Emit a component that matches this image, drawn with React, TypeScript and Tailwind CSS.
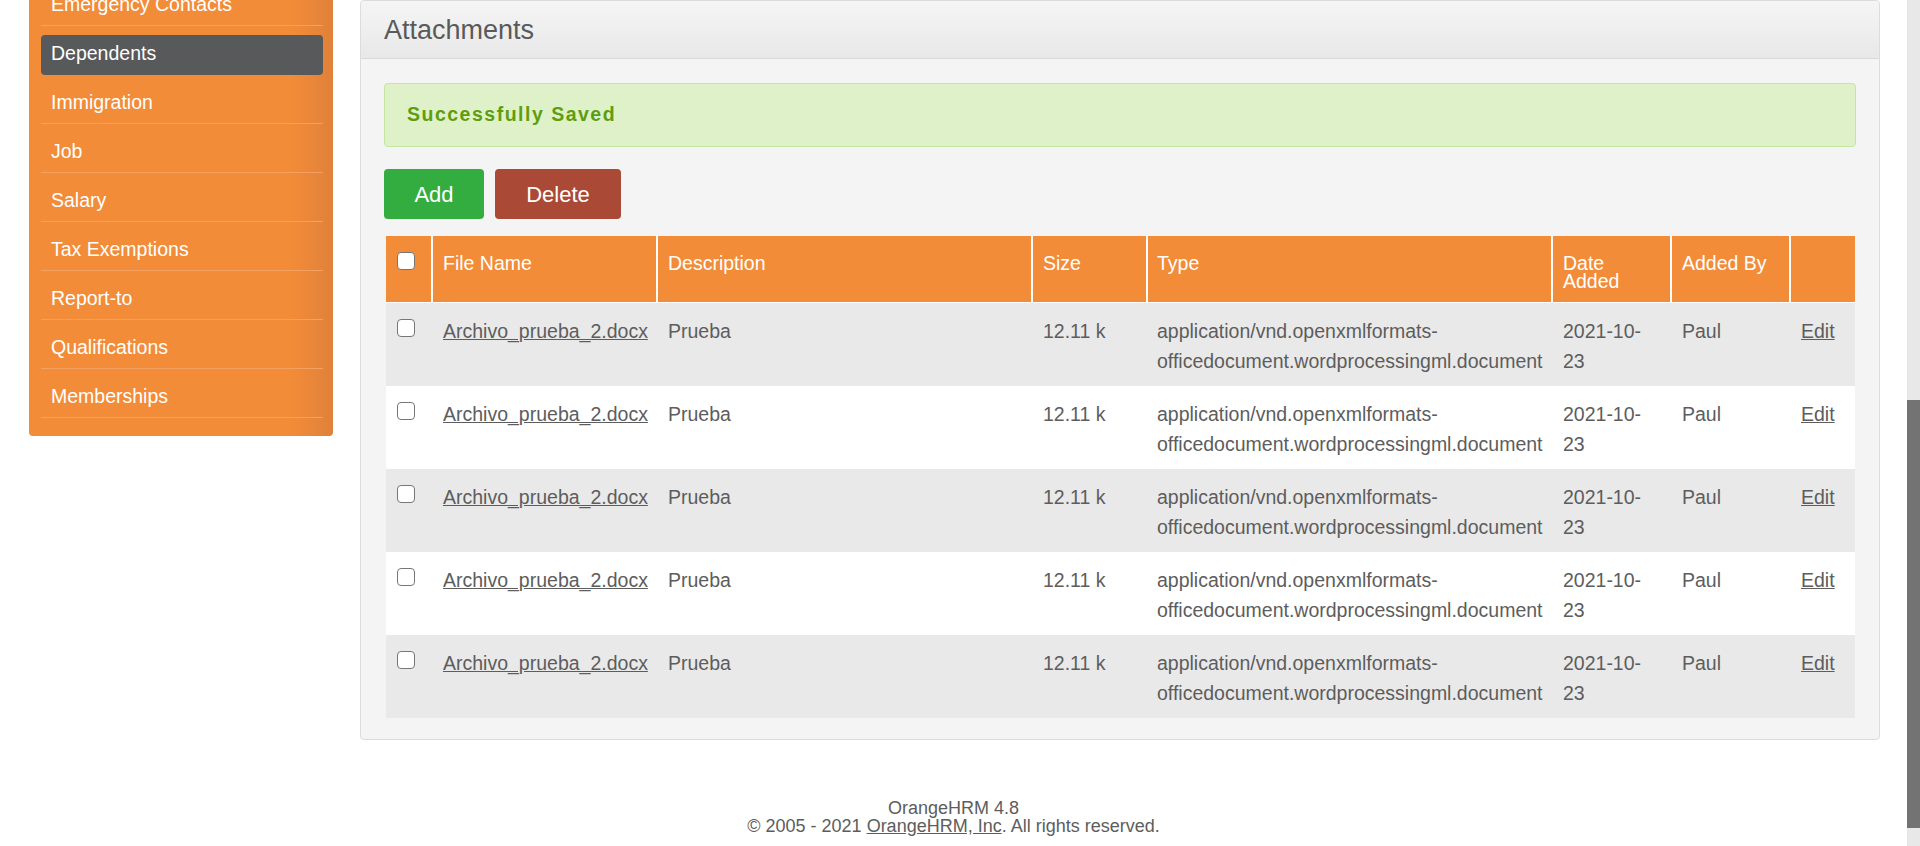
import React from "react";

const menu = [
  "Emergency Contacts",
  "Dependents",
  "Immigration",
  "Job",
  "Salary",
  "Tax Exemptions",
  "Report-to",
  "Qualifications",
  "Memberships",
];

function Check() {
  return (
    <span className="block w-[18px] h-[18px] rounded-[4px] border-[1.5px] border-[#767676] bg-white" />
  );
}

const cols = "grid grid-cols-[45px_225px_375px_115px_405px_119px_119px_66px]";

function Row({ shaded }: { shaded: boolean }) {
  return (
    <div className={`${cols} h-[83px] ${shaded ? "bg-[#e9e9e9]" : "bg-white"} text-[19.5px] leading-[30px] text-[#5d5d5d]`}>
      <div className="pl-[11px] pt-[16px]">
        <Check />
      </div>
      <div className="pl-[12px] pt-[13px] whitespace-nowrap">
        <a className="underline cursor-pointer">Archivo_prueba_2.docx</a>
      </div>
      <div className="pl-[12px] pt-[13px]">Prueba</div>
      <div className="pl-[12px] pt-[13px] whitespace-nowrap">12.11 k</div>
      <div className="pl-[11px] pt-[13px] whitespace-nowrap">
        application/vnd.openxmlformats-
        <br />
        officedocument.wordprocessingml.document
      </div>
      <div className="pl-[12px] pt-[13px] whitespace-nowrap">
        2021-10-
        <br />
        23
      </div>
      <div className="pl-[12px] pt-[13px]">Paul</div>
      <div className="pl-[12px] pt-[13px]">
        <a className="underline cursor-pointer">Edit</a>
      </div>
    </div>
  );
}

export default function App() {
  return (
    <div className="flex w-[1920px] h-[846px] overflow-hidden bg-white font-['Liberation_Sans',Arial,sans-serif]">
      <div className="flex-1 flex flex-col">
        <div className="flex items-start">
          {/* Sidebar */}
          <div className="ml-[29px] -mt-[23px] w-[304px] rounded-b-[4px] bg-[linear-gradient(to_right,#f28c38_0%,#f28c38_86%,#e0813a_100%)] pl-[12px] pr-[10px] pb-[18px]">
            {menu.map((m) =>
              m === "Dependents" ? (
                <div key={m} className="pt-[9px]">
                  <div className="h-[40px] rounded-[4px] bg-[#58595b] pl-[10px] text-[19.5px] leading-[37px] text-white">
                    {m}
                  </div>
                </div>
              ) : (
                <div key={m} className="pt-[9px] border-b border-[#f4a061]">
                  <div className="h-[39px] pl-[10px] text-[19.5px] leading-[37px] text-white whitespace-nowrap">
                    {m}
                  </div>
                </div>
              )
            )}
          </div>

          {/* Main panel */}
          <div className="ml-[27px] w-[1520px] border border-[#dcdcdc] rounded-[4px] bg-[#f4f4f4]">
            <div className="h-[58px] border-b border-[#dadada] bg-[linear-gradient(to_bottom,#f5f5f5,#e8e8e8)] rounded-t-[4px] pl-[23px] text-[27px] leading-[58px] text-[#5a5a5a]">
              Attachments
            </div>
            <div className="pt-[24px] px-[23px] pb-[21px]">
              <div className="h-[64px] rounded-[4px] border border-[#c5e6a1] bg-[#dff1c8] flex items-center pl-[22px]">
                <span className="text-[19.5px] font-bold tracking-[1.5px] text-[#5e9e0e]">
                  Successfully Saved
                </span>
              </div>
              <div className="mt-[22px] flex gap-[11px]">
                <button className="w-[100px] h-[50px] rounded-[4px] bg-[#33ad40] text-white text-[22px]">
                  Add
                </button>
                <button className="w-[126px] h-[50px] rounded-[4px] bg-[#aa4936] text-white text-[22px]">
                  Delete
                </button>
              </div>
              <div className="mt-[17px] ml-[2px] w-[1469px]">
                <div className={`${cols} h-[67px] border-b border-white text-[19.5px] leading-[18px] text-white`}>
                  <div className="bg-[#f28c38] pl-[11px] pt-[16px]">
                    <Check />
                  </div>
                  <div className="bg-[#f28c38] border-l-2 border-white pl-[10px] pt-[18px]">File Name</div>
                  <div className="bg-[#f28c38] border-l-2 border-white pl-[10px] pt-[18px]">Description</div>
                  <div className="bg-[#f28c38] border-l-2 border-white pl-[10px] pt-[18px]">Size</div>
                  <div className="bg-[#f28c38] border-l-2 border-white pl-[9px] pt-[18px]">Type</div>
                  <div className="bg-[#f28c38] border-l-2 border-white pl-[10px] pt-[18px]">
                    Date
                    <br />
                    Added
                  </div>
                  <div className="bg-[#f28c38] border-l-2 border-white pl-[10px] pt-[18px] whitespace-nowrap">Added By</div>
                  <div className="bg-[#f28c38] border-l-2 border-white" />
                </div>
                {[0, 1, 2, 3, 4].map((i) => (
                  <Row key={i} shaded={i % 2 === 0} />
                ))}
              </div>
            </div>
          </div>
        </div>

        {/* Footer */}
        <div className="mt-[59px] text-center text-[18px] leading-[18px] text-[#5d5d5d]">
          <div>OrangeHRM 4.8</div>
          <div>
            © 2005 - 2021 <a className="underline cursor-pointer">OrangeHRM, Inc</a>. All rights reserved.
          </div>
        </div>
      </div>

      {/* Scrollbar */}
      <div className="w-[13px] h-[846px] bg-[#e8e8e8] flex flex-col">
        <div className="mt-[400px] h-[428px] bg-[#737373]" />
      </div>
    </div>
  );
}
